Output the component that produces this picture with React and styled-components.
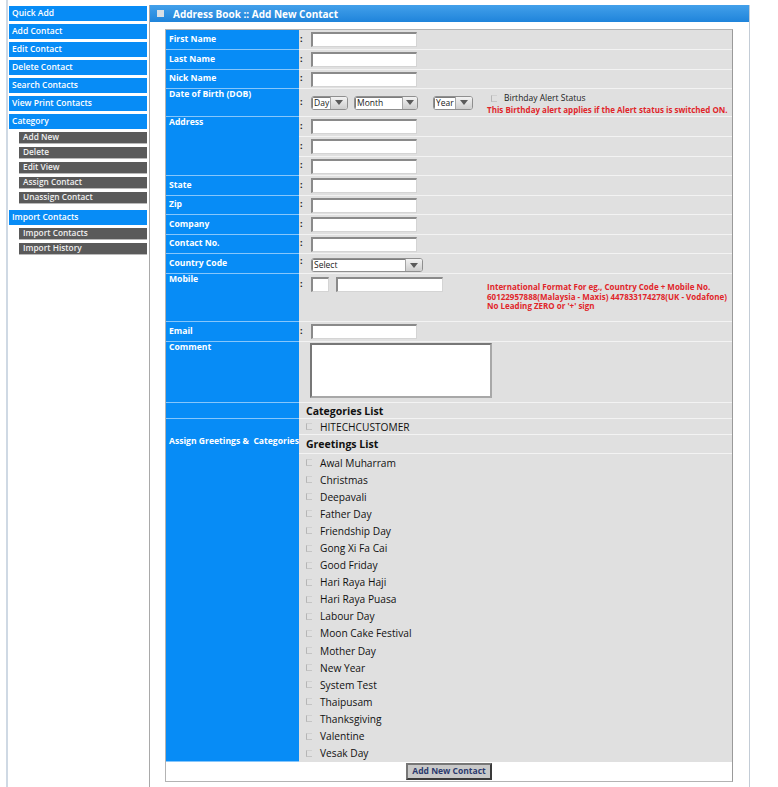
import React from 'react';
import styled, { createGlobalStyle } from 'styled-components';

const BLUE = '#078cf6';
const FONT = '"Open Sans", "Noto Sans", "DejaVu Sans", sans-serif';

const Global = createGlobalStyle`
  html, body, #root { margin: 0; padding: 0; height: 100%; background: #fff; }
  body { font-family: ${FONT}; }
  * { box-sizing: border-box; }
`;

const Page = styled.div`
  display: flex;
  align-items: stretch;
  height: 100%;
  min-height: 787px;
`;

const Sidebar = styled.nav`
  flex: 0 0 143px;
  margin-left: 6px;
  border-left: 2px solid #cfd9e4;
  padding: 6px 2px 0 1px;
  display: flex;
  flex-direction: column;
`;

const MenuItem = styled.div`
  height: 15px;
  margin: ${p => (p.$spaced ? '3px' : '0')} 0 3px 0;
  background: ${BLUE};
  color: #fff;
  font-weight: 600;
  font-size: 8.5px;
  line-height: 11px;
  padding: 1px 3px 0;
  white-space: nowrap;
`;

const SubItem = styled.div`
  height: 12px;
  margin: 0 0 3px 10px;
  background: #5a5a5a;
  border-bottom: 1px solid #b9b9b9;
  color: #f0f0f0;
  font-weight: 600;
  font-size: 8.3px;
  line-height: 10px;
  padding: 0 4px;
  white-space: nowrap;
`;

const Main = styled.main`
  flex: 0 0 601px;
  margin-top: 5px;
  border-left: 1px solid #a9a9a9;
  border-right: 1px solid #c3ccd6;
  display: flex;
  flex-direction: column;
`;

const Header = styled.div`
  height: 17px;
  background: linear-gradient(#43a0ea, #1f84db);
  display: flex;
  align-items: center;
  padding-left: 7px;
  gap: 9px;
`;

const HeaderIcon = styled.span`
  width: 7px;
  height: 7px;
  background: #d9dfe5;
`;

const Title = styled.h1`
  margin: 0;
  color: #fff;
  font-size: 10px;
  font-weight: 700;
  line-height: 12px;
`;

const Form = styled.form`
  margin: 7px 16px 0 15px;
  border: 1px solid #b3b3b3;
  border-right-color: #9a9a9a;
  display: flex;
  flex-direction: column;
`;

const Row = styled.div`
  display: grid;
  grid-template-columns: 133px 1fr;
  height: ${p => p.$h}px;
`;

const Label = styled.div`
  background: ${BLUE};
  border-bottom: 1px solid #86c6fb;
  color: #fff;
  font-weight: 700;
  font-size: 8.6px;
  line-height: 10px;
  padding: ${p => (p.$top ? `${p.$pt || 0}px 0 0 3px` : '0 0 2px 3px')};
  display: flex;
  align-items: ${p => (p.$top ? 'flex-start' : 'center')};
  white-space: pre;
`;

const Value = styled.div`
  background: #e0e0e0;
  border-bottom: 1px solid #f3f3f3;
  display: flex;
  align-items: ${p => p.$align || 'center'};
  padding: ${p => p.$pt || 0}px 0 0 ${p => (p.$pl == null ? 1 : p.$pl)}px;
  height: ${p => (p.$h ? `${p.$h}px` : 'auto')};
`;

const Stack = styled.div`
  display: flex;
  flex-direction: column;
  background: #e0e0e0;
`;

const Colon = styled.span`
  flex: 0 0 11px;
  font-weight: 700;
  font-size: 9px;
  line-height: 9px;
  color: #111;
  align-self: ${p => (p.$top ? 'flex-start' : 'auto')};
  margin-bottom: ${p => (p.$top ? 0 : 3)}px;
  margin-top: ${p => (p.$top ? 2 : 0)}px;
`;

const TextInput = styled.input`
  width: ${p => p.$w || 106}px;
  height: 15px;
  margin: 0 ${p => p.$mr || 0}px 0 0;
  padding: 0 2px;
  border-style: solid;
  border-width: 2px 1px 1px 2px;
  border-color: #8a8a8a #d4d4d4 #d4d4d4 #8a8a8a;
  background: #fff;
  font: 9px ${FONT};
  outline: none;
  flex-shrink: 0;
`;

const TextArea = styled.textarea`
  width: 182px;
  height: 55px;
  margin: 0;
  border-style: solid;
  border-width: 2px;
  border-color: #777 #a8a8a8 #a8a8a8 #777;
  background: #fff;
  resize: none;
  outline: none;
  font: 9px ${FONT};
`;

const SelectBox = styled.div`
  width: ${p => p.$w}px;
  height: 14px;
  margin: 0 ${p => p.$mr || 0}px ${p => p.$mb || 0}px 0;
  display: flex;
  border: 1px solid #8f8f8f;
  border-radius: 3px;
  overflow: hidden;
  flex-shrink: 0;
  background: #fff;
`;

const SelectText = styled.span`
  flex: 1;
  background: #fff;
  border-right: 1px solid #a5a5a5;
  box-shadow: inset 1px 1px 0 #7d7d7d;
  font-size: 8.5px;
  line-height: 12px;
  color: #222;
  padding-left: 2px;
  white-space: nowrap;
`;

const SelectArrow = styled.span`
  flex: 0 0 ${p => p.$aw || 16}px;
  background: linear-gradient(#f2f2f2, #cdcdcd);
  display: flex;
  align-items: center;
  justify-content: center;
`;

const AlertBlock = styled.div`
  margin-left: 14px;
  margin-top: 3px;
  display: flex;
  flex-direction: column;
`;

const AlertLine = styled.div`
  display: flex;
  align-items: center;
  padding-left: 4px;
  font-size: 8.5px;
  line-height: 12px;
  color: #222;
`;

const Warn = styled.div`
  color: #e0262b;
  font-weight: 700;
  font-size: 8px;
  line-height: ${p => p.$lh || 12}px;
  white-space: nowrap;
  margin: ${p => p.$m || 0};
`;

const Check = styled.span`
  flex: 0 0 6px;
  width: 6px;
  height: 7px;
  border-left: 1px solid #b5b5b5;
  border-top: 1px solid #d0d0d0;
  border-bottom: 1px solid #c4c4c4;
  margin-right: ${p => p.$mr || 8}px;
`;

const ListTitle = styled.div`
  height: ${p => p.$h}px;
  background: #e0e0e0;
  border-bottom: 1px solid #f3f3f3;
  display: flex;
  align-items: center;
  padding-left: 7px;
  font-weight: 700;
  font-size: 10.5px;
  color: #111;
`;

const ListItem = styled.div`
  height: ${p => p.$h || 17.1}px;
  border-bottom: ${p => (p.$line ? '1px solid #f3f3f3' : 'none')};
  display: flex;
  align-items: center;
  padding-left: 7px;
  font-size: 10.2px;
  color: #111;
  white-space: nowrap;
`;

const Section = styled.div`
  display: grid;
  grid-template-columns: 133px 1fr;
`;

const ButtonRow = styled.div`
  height: 19px;
  background: #fff;
  display: flex;
  align-items: center;
  justify-content: center;
`;

const Button = styled.button`
  width: 86px;
  height: 17px;
  padding: 0;
  background: #c9c9c9;
  border: 2px solid;
  border-color: #777 #3a3a3a #3a3a3a #777;
  color: #2b3a6e;
  font: 700 8.5px ${FONT};
  line-height: 12px;
`;

const Arrow = () => (
  <svg width="8" height="5" viewBox="0 0 8 5">
    <polygon points="0,0 8,0 4,5" fill="#5a5a5a" />
  </svg>
);

const FakeSelect = ({ w, aw, mr, mb, text }) => (
  <SelectBox $w={w} $mr={mr} $mb={mb}>
    <SelectText>{text}</SelectText>
    <SelectArrow $aw={aw}>
      <Arrow />
    </SelectArrow>
  </SelectBox>
);

const menu = [
  { t: 'Quick Add' },
  { t: 'Add Contact' },
  { t: 'Edit Contact' },
  { t: 'Delete Contact' },
  { t: 'Search Contacts' },
  { t: 'View Print Contacts' },
  { t: 'Category' },
  { t: 'Add New', sub: true },
  { t: 'Delete', sub: true },
  { t: 'Edit View', sub: true },
  { t: 'Assign Contact', sub: true },
  { t: 'Unassign Contact', sub: true },
  { t: 'Import Contacts', spaced: true },
  { t: 'Import Contacts', sub: true },
  { t: 'Import History', sub: true },
];

const simpleRows = [
  ['First Name', 20],
  ['Last Name', 20],
  ['Nick Name', 19],
];

const midRows = [
  ['State', 20],
  ['Zip', 19],
  ['Company', 20],
  ['Contact No.', 19],
];

const greetings = [
  'Awal Muharram', 'Christmas', 'Deepavali', 'Father Day', 'Friendship Day',
  'Gong Xi Fa Cai', 'Good Friday', 'Hari Raya Haji', 'Hari Raya Puasa',
  'Labour Day', 'Moon Cake Festival', 'Mother Day', 'New Year', 'System Test',
  'Thaipusam', 'Thanksgiving', 'Valentine', 'Vesak Day',
];

const InputRow = ({ label, h }) => (
  <Row $h={h}>
    <Label>{label}</Label>
    <Value>
      <Colon>:</Colon>
      <TextInput type="text" />
    </Value>
  </Row>
);

export default function App() {
  return (
    <>
      <Global />
      <Page>
        <Sidebar>
          {menu.map((m, i) =>
            m.sub ? (
              <SubItem key={i}>{m.t}</SubItem>
            ) : (
              <MenuItem key={i} $spaced={m.spaced}>{m.t}</MenuItem>
            )
          )}
        </Sidebar>
        <Main>
          <Header>
            <HeaderIcon />
            <Title>Address Book :: Add New Contact</Title>
          </Header>
          <Form onSubmit={e => e.preventDefault()}>
            {simpleRows.map(([l, h]) => (
              <InputRow key={l} label={l} h={h} />
            ))}
            <Row $h={28}>
              <Label $top $pt={0}>Date of Birth (DOB)</Label>
              <Value>
                <Colon>:</Colon>
                <FakeSelect w={37} aw={16} mr={6} text="Day" />
                <FakeSelect w={64} aw={14} mr={15} text="Month" />
                <FakeSelect w={40} aw={16} text="Year" />
                <AlertBlock>
                  <AlertLine>
                    <Check $mr={7} />
                    Birthday Alert Status
                  </AlertLine>
                  <Warn>This Birthday alert applies if the Alert status is switched ON.</Warn>
                </AlertBlock>
              </Value>
            </Row>
            <Row $h={59}>
              <Label $top $pt={0}>Address</Label>
              <Stack>
                {[20, 20, 19].map((h, i) => (
                  <Value key={i} $h={h}>
                    <Colon>:</Colon>
                    <TextInput type="text" />
                  </Value>
                ))}
              </Stack>
            </Row>
            {midRows.map(([l, h]) => (
              <InputRow key={l} label={l} h={h} />
            ))}
            <Row $h={20}>
              <Label>Country Code</Label>
              <Value $align="flex-end">
                <Colon $top>:</Colon>
                <FakeSelect w={112} aw={16} mb={1} text="Select" />
              </Value>
            </Row>
            <Row $h={48}>
              <Label $top $pt={0}>Mobile</Label>
              <Value $align="flex-start" $pt={3}>
                <Colon $top>:</Colon>
                <TextInput type="text" $w={18} $mr={7} />
                <TextInput type="text" $w={107} />
                <Warn $lh={9.5} $m="5px 0 0 44px">
                  International Format For eg., Country Code + Mobile No.
                  <br />
                  60122957888(Malaysia - Maxis) 447833174278(UK - Vodafone)
                  <br />
                  No Leading ZERO or '+' sign
                </Warn>
              </Value>
            </Row>
            <InputRow label="Email" h={20} />
            <Row $h={61}>
              <Label $top $pt={0}>Comment</Label>
              <Value $align="flex-start" $pt={1} $pl={11}>
                <TextArea />
              </Value>
            </Row>
            <Row $h={16}>
              <Label />
              <ListTitle $h={16}>Categories List</ListTitle>
            </Row>
            <Section>
              <Label $top $pt={17}>{'Assign Greetings &  Categories'}</Label>
              <Stack>
                <ListItem $h={16} $line>
                  <Check />
                  HITECHCUSTOMER
                </ListItem>
                <ListTitle $h={19}>Greetings List</ListTitle>
                {greetings.map(g => (
                  <ListItem key={g}>
                    <Check />
                    {g}
                  </ListItem>
                ))}
              </Stack>
            </Section>
            <ButtonRow>
              <Button type="submit">Add New Contact</Button>
            </ButtonRow>
          </Form>
        </Main>
      </Page>
    </>
  );
}
